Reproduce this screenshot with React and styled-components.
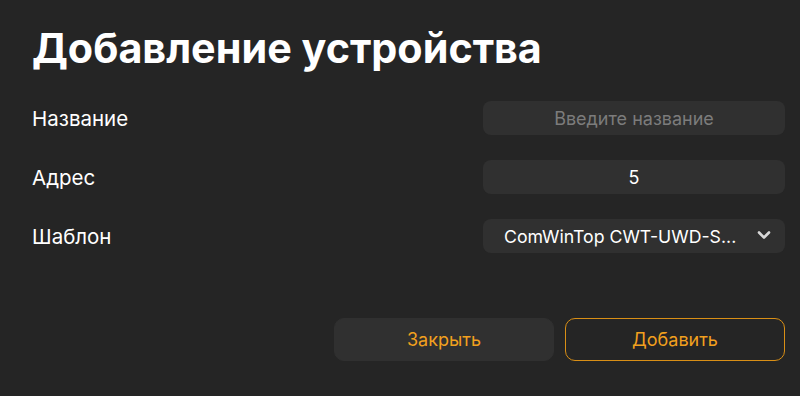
import React from "react";
import styled, { createGlobalStyle } from "styled-components";

const GlobalStyle = createGlobalStyle`
  html, body {
    margin: 0;
    background: #252525;
  }
  body {
    font-family: Inter, "Noto Sans", sans-serif;
  }
`;

const Page = styled.div`
  width: 800px;
  height: 396px;
  box-sizing: border-box;
  padding: 22px 15px 0 32px;
  display: flex;
  flex-direction: column;
  color: #fff;
`;

const Title = styled.h1`
  margin: 0;
  font-size: 41.3px;
  font-weight: 700;
  line-height: 52px;
`;

const Form = styled.div`
  margin-top: 27px;
  display: flex;
  flex-direction: column;
  gap: 25px;
`;

const Row = styled.div`
  display: flex;
  align-items: center;
  justify-content: space-between;
  height: 34px;
`;

const Label = styled.span`
  font-size: 20.5px;
  font-weight: 400;
`;

const Field = styled.input`
  width: 302px;
  height: 34px;
  box-sizing: border-box;
  border: none;
  outline: none;
  border-radius: 8px;
  background: #303030;
  color: #fff;
  font-family: inherit;
  font-size: 18px;
  text-align: center;
  &::placeholder {
    color: #7c7c7c;
  }
`;

const Select = styled.div`
  position: relative;
  width: 302px;
  height: 34px;
  box-sizing: border-box;
  border-radius: 8px;
  background: #303030;
  display: flex;
  align-items: center;
  padding: 0 40px 0 21px;
  font-size: 17.7px;
  white-space: nowrap;
  svg {
    position: absolute;
    right: 14px;
    top: 11px;
  }
`;

const Actions = styled.div`
  margin-top: 65px;
  display: flex;
  justify-content: flex-end;
  gap: 11px;
`;

const Button = styled.button`
  width: 220px;
  height: 43px;
  box-sizing: border-box;
  border-radius: 10px;
  font-family: inherit;
  font-size: 18px;
  color: #f2a01e;
  cursor: pointer;
  background: ${(p) => (p.$outlined ? "#252525" : "#303030")};
  border: ${(p) => (p.$outlined ? "1px solid #d98f16" : "1px solid #303030")};
`;

const Chevron = () => (
  <svg width="14" height="10" viewBox="0 0 14 10">
    <path
      d="M2 2.5 L7 7.5 L12 2.5"
      fill="none"
      stroke="#d8d8d8"
      strokeWidth="2.6"
      strokeLinecap="round"
      strokeLinejoin="round"
    />
  </svg>
);

const App = () => {
  return (
    <>
      <GlobalStyle />
      <Page>
        <Title>Добавление устройства</Title>
        <Form>
          <Row>
            <Label>Название</Label>
            <Field placeholder="Введите название" />
          </Row>
          <Row>
            <Label>Адрес</Label>
            <Field defaultValue="5" />
          </Row>
          <Row>
            <Label>Шаблон</Label>
            <Select>
              ComWinTop CWT-UWD-S...
              <Chevron />
            </Select>
          </Row>
        </Form>
        <Actions>
          <Button>Закрыть</Button>
          <Button $outlined>Добавить</Button>
        </Actions>
      </Page>
    </>
  );
};

export default App;
